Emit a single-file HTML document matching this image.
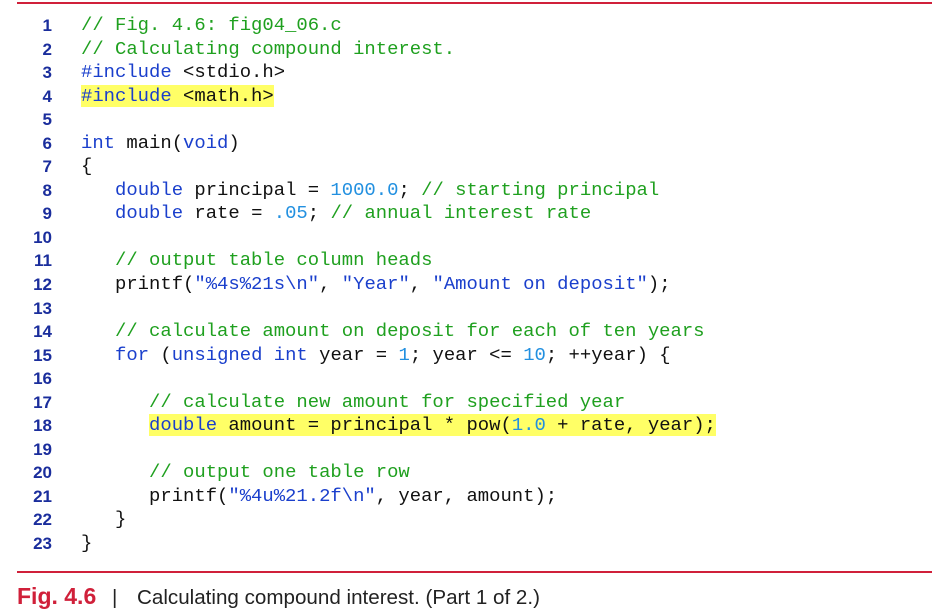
<!DOCTYPE html>
<html><head><meta charset="utf-8"><style>
body{margin:0;width:932px;height:616px;background:#fff;position:relative;overflow:hidden}
.rule{position:absolute;left:17px;right:0;height:2px;background:#d0203a}
pre{position:absolute;left:0;top:14px;margin:0;font-family:"Liberation Mono",monospace;font-size:18.9px;line-height:23.55px;color:#111}
.n{display:inline-block;height:23.55px;line-height:23.55px;vertical-align:top;width:52px;text-align:right;font-family:"Liberation Sans",sans-serif;font-weight:bold;color:#1a2d9c;font-size:17px;margin-right:29px}
.c{color:#1fa01f}.k{color:#1a3fcc}.d{color:#2290e0}.s{color:#1a3fcc}
.h{background:#ffff66}
.cap{position:absolute;left:17px;top:583px;font-family:"Liberation Sans",sans-serif;font-size:20.6px;color:#222;white-space:nowrap}
.cap b{color:#d0203a;font-size:23px;display:inline-block;width:95px}
.cap i{font-style:normal;display:inline-block;width:25px}
</style></head><body>
<div class="rule" style="top:2px"></div>
<pre><span class="n">1</span><span class="c">// Fig. 4.6: fig04_06.c</span>
<span class="n">2</span><span class="c">// Calculating compound interest.</span>
<span class="n">3</span><span class="k">#include</span> &lt;stdio.h&gt;
<span class="n">4</span><span class="h"><span class="k">#include</span> &lt;math.h&gt;</span>
<span class="n">5</span>
<span class="n">6</span><span class="k">int</span> main(<span class="k">void</span>)
<span class="n">7</span>{
<span class="n">8</span>   <span class="k">double</span> principal = <span class="d">1000.0</span>; <span class="c">// starting principal</span>
<span class="n">9</span>   <span class="k">double</span> rate = <span class="d">.05</span>; <span class="c">// annual interest rate</span>
<span class="n">10</span>
<span class="n">11</span>   <span class="c">// output table column heads</span>
<span class="n">12</span>   printf(<span class="s">"%4s%21s\n"</span>, <span class="s">"Year"</span>, <span class="s">"Amount on deposit"</span>);
<span class="n">13</span>
<span class="n">14</span>   <span class="c">// calculate amount on deposit for each of ten years</span>
<span class="n">15</span>   <span class="k">for</span> (<span class="k">unsigned int</span> year = <span class="d">1</span>; year &lt;= <span class="d">10</span>; ++year) {
<span class="n">16</span>
<span class="n">17</span>      <span class="c">// calculate new amount for specified year</span>
<span class="n">18</span>      <span class="h"><span class="k">double</span> amount = principal * pow(<span class="d">1.0</span> + rate, year);</span>
<span class="n">19</span>
<span class="n">20</span>      <span class="c">// output one table row</span>
<span class="n">21</span>      printf(<span class="s">"%4u%21.2f\n"</span>, year, amount);
<span class="n">22</span>   }
<span class="n">23</span>}</pre>
<div class="rule" style="top:571px"></div>
<div class="cap"><b>Fig. 4.6</b><i>|</i>Calculating compound interest. (Part 1 of 2.)</div>
</body></html>
